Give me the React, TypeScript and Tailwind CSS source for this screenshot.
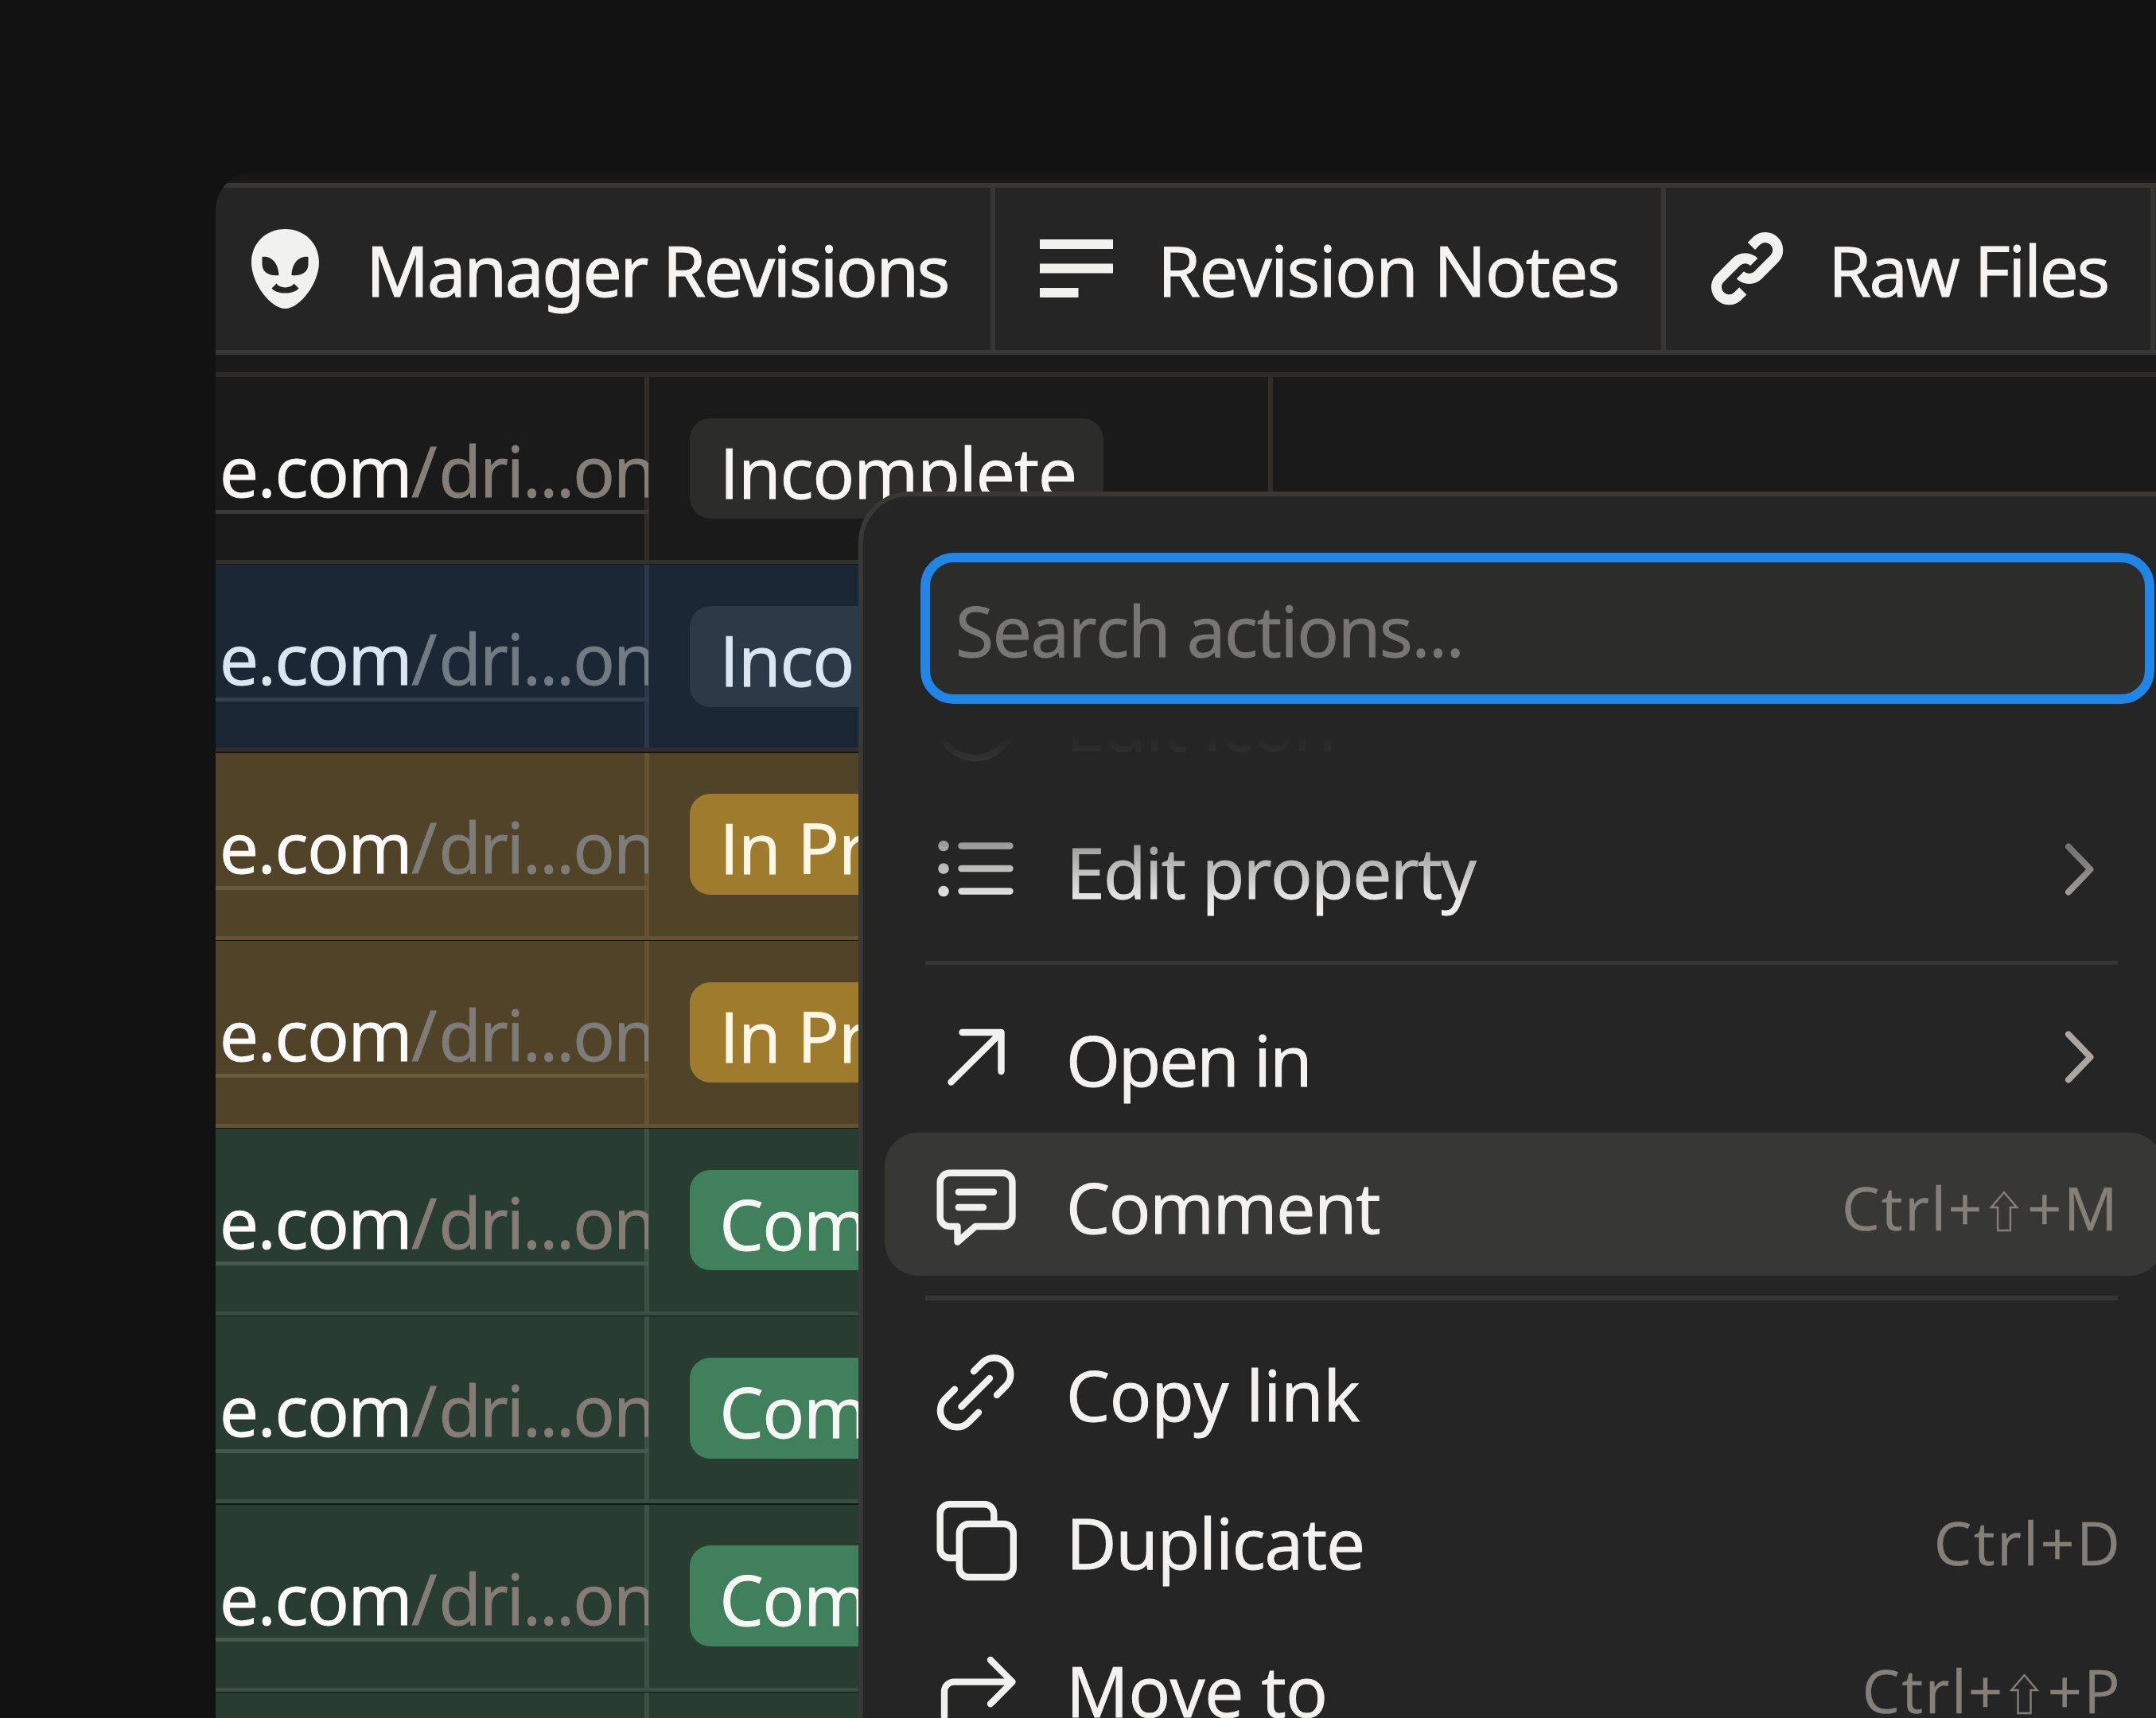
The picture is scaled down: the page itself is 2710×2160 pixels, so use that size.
import type { ReactNode } from "react";
import clsx from "clsx";

type Tone = "plain" | "blue" | "amber" | "green";

const TONES: Record<
  Tone,
  { row: string; edge: string; line: string; underline: string; link: string; muted: string; pill: string }
> = {
  plain: {
    row: "bg-[#1a1a1a]",
    edge: "border-[#323130]",
    line: "border-[#2e2d2c]",
    underline: "border-[#3c3a38]",
    link: "text-[#f8f7f6]",
    muted: "text-[#857e78]",
    pill: "bg-[#2c2c2b] text-[#f7f6f5]",
  },
  blue: {
    row: "bg-[#1b2735]",
    edge: "border-[#2d2e31]",
    line: "border-[#2c3847]",
    underline: "border-[#334050]",
    link: "text-[#dbe6f0]",
    muted: "text-[#727a84]",
    pill: "bg-[#2d3947] text-[#dbe6f0]",
  },
  amber: {
    row: "bg-[#514328]",
    edge: "border-[#655434]",
    line: "border-[#635334]",
    underline: "border-[#695b3b]",
    link: "text-[#fcfbf9]",
    muted: "text-[#7e7c79]",
    pill: "bg-[#9f7b2d] text-[#fcf7e6]",
  },
  green: {
    row: "bg-[#283c32]",
    edge: "border-[#3b4e42]",
    line: "border-[#3c5044]",
    underline: "border-[#46574b]",
    link: "text-[#fcfbfa]",
    muted: "text-[#857c76]",
    pill: "bg-[#41805d] text-[#f7f7f6]",
  },
};

const ROWS: { tone: Tone; status: string }[] = [
  { tone: "plain", status: "Incomplete" },
  { tone: "blue", status: "Incomplete" },
  { tone: "amber", status: "In Progress" },
  { tone: "amber", status: "In Progress" },
  { tone: "green", status: "Completed" },
  { tone: "green", status: "Completed" },
  { tone: "green", status: "Completed" },
  { tone: "green", status: "Completed" },
];

function AlienIcon() {
  return (
    <svg viewBox="0 0 85 100" className="h-[100px] w-[85px] shrink-0">
      <path
        fill="#f1f1ef"
        fillRule="evenodd"
        d="M42.5 0C67 0 85 18 85 42C85 68 61 100 42.5 100S0 68 0 42C0 18 18 0 42.5 0ZM13.5 35C25 33 34 43 34.5 58C22 59.500 13.500 54 13.500 44ZM71.500 35C60 33 51 43 50.500 58C63 59.500 71.500 54 71.500 44ZM31.500 68.500C36 75 49 75 53.500 68.500L59.500 74.500C53 82.500 32 82.500 25.500 74.500Z"
      />
    </svg>
  );
}

function TextIcon() {
  return (
    <svg viewBox="0 0 92 73" fill="#f1f1ef" className="h-[73px] w-[92px] shrink-0">
      <rect width="92" height="12" />
      <rect y="30.500" width="92" height="12" />
      <rect y="61" width="48.500" height="12" />
    </svg>
  );
}

function ChainIcon() {
  return (
    <svg
      viewBox="0 0 92 93"
      fill="none"
      stroke="#f1f1ef"
      strokeWidth="13"
      className="h-[93px] w-[92px] shrink-0"
    >
      <path d="M51.400 18.400L58.600 11.200A15.900 15.900 0 0 1 81 33.600L59.800 54.800A15.900 15.900 0 0 1 37.400 54.800" />
      <path d="M40.800 74.800L33.600 82A15.900 15.900 0 0 1 11.200 59.600L32.400 38.400A15.900 15.900 0 0 1 54.800 38.400" />
    </svg>
  );
}

function MenuIcon({ children }: { children: ReactNode }) {
  return (
    <svg
      viewBox="0 0 104 104"
      fill="none"
      stroke="#f1f1ef"
      strokeWidth="8.4"
      strokeLinecap="round"
      strokeLinejoin="round"
      className="size-[104px] shrink-0"
    >
      {children}
    </svg>
  );
}

function Chevron() {
  return (
    <svg
      viewBox="0 0 36 66"
      fill="none"
      stroke="#aba6a1"
      strokeWidth="8"
      strokeLinecap="round"
      strokeLinejoin="round"
      className="mr-[35px] h-[66px] w-9 shrink-0"
    >
      <path d="M4 4.500L31.500 33L4 61.500" />
    </svg>
  );
}

function Shift() {
  return (
    <span className="-ml-0.5 inline-block align-[3px] font-['Noto_Sans_CJK_SC',sans-serif] text-[54px] leading-none">
      ⇧
    </span>
  );
}

function HeaderCell({ className, children }: { className: string; children: ReactNode }) {
  return (
    <div className={clsx("flex h-full shrink-0 items-center border-r-[6px] border-[#373635]", className)}>
      {children}
    </div>
  );
}

function Row({ tone, status }: { tone: Tone; status: string }) {
  const t = TONES[tone];
  return (
    <div className="h-[236.25px] shrink-0 bg-[#151512] pb-[1.25px]">
      <div className={clsx("flex h-full border-b-[5px]", t.row, t.edge)}>
        <div className={clsx("w-[545px] shrink-0 border-r-[6px]", t.line)}>
          <div
            className={clsx(
              "-mr-[5px] h-[172px] overflow-hidden whitespace-nowrap border-b-[5px] pl-[5px] pt-[66px] leading-[103px] tracking-[-1.3px]",
              t.underline,
            )}
          >
            <span className={t.link}>e.com</span>
            <span className={clsx("tracking-[-1.9px]", t.muted)}>
              <span className="mr-[4px]">/</span>dri...on
            </span>
          </div>
        </div>
        <div
          className={clsx(
            "flex w-[784px] shrink-0 items-center pl-[50.5px]",
            tone === "plain" && "border-r-[6px]",
            t.line,
          )}
        >
          <div
            className={clsx(
              "h-[126.5px] whitespace-nowrap rounded-[26px] pl-[38px] pr-[34px] pt-[8px] leading-[118.5px] tracking-[-1px]",
              t.pill,
            )}
          >
            {status}
          </div>
        </div>
      </div>
    </div>
  );
}

function MenuItem({
  icon,
  label,
  tracking,
  active,
  children,
}: {
  icon: ReactNode;
  label: string;
  tracking?: string;
  active?: boolean;
  children?: ReactNode;
}) {
  return (
    <div
      className={clsx(
        "flex h-[180px] shrink-0 items-center rounded-[42px] pl-[62px]",
        active ? "bg-[#373736] pr-[55px]" : "pr-[52px]",
      )}
    >
      <MenuIcon>{icon}</MenuIcon>
      <span className={clsx("ml-[62px] flex-1 whitespace-nowrap pt-[6px] text-[#f3f2f1]", tracking)}>
        {label}
      </span>
      {children}
    </div>
  );
}

function Shortcut({ children }: { children: ReactNode }) {
  return (
    <span className="whitespace-nowrap pt-[7px] text-[75.5px] leading-[100px] tracking-[2.3px] text-[#857f7a] [-webkit-text-stroke:0.4px]">
      {children}
    </span>
  );
}

function Divider() {
  return <div className="my-[19.5px] ml-[51px] mr-[57px] h-[5.5px] shrink-0 bg-[#363635]" />;
}

export default function App() {
  return (
    <div className="relative h-[2160px] w-[2710px] overflow-hidden bg-[#121212] pl-[271px] pt-[215px] font-['Open_Sans',sans-serif] text-[87.5px] leading-[120px] [-webkit-text-stroke:1px]">
      <div className="flex h-full flex-col overflow-hidden rounded-tl-[50px] bg-linear-to-b from-[#131313] to-[#191a19] to-[14px] pt-[14.5px]">
        <div className="flex h-[216.5px] shrink-0 border-y-[6.5px] border-[#393736] bg-[#252525] text-[#f5f4f3]">
          <HeaderCell className="w-[980px] pl-[45px]">
            <AlienIcon />
            <span className="ml-[59px] whitespace-nowrap pt-[2px] font-['Noto_Sans',sans-serif] tracking-[-2.6px]">
              Manager Revisions
            </span>
          </HeaderCell>
          <HeaderCell className="w-[843px] pl-[56px]">
            <TextIcon />
            <span className="ml-[56px] whitespace-nowrap pt-[2px] tracking-[-1.6px]">Revision Notes</span>
          </HeaderCell>
          <HeaderCell className="w-[615px] pl-[56px]">
            <ChainIcon />
            <span className="ml-[56px] whitespace-nowrap pt-[2px] tracking-[-2.4px]">Raw Files</span>
          </HeaderCell>
        </div>
        <div className="mt-[22px] h-[6px] shrink-0 bg-[#2d2b2a]" />
        {ROWS.map((row, i) => (
          <Row key={i} tone={row.tone} status={row.status} />
        ))}
      </div>

      <div className="absolute left-[1079px] top-[617.5px] flex h-[1700px] w-[1760px] flex-col rounded-[64px] border-[6px] border-[#393837] bg-[#252525]">
        <div className="ml-[72px] mt-[71.5px] h-[190px] w-[1551px] shrink-0 rounded-[42px] border-[12.5px] border-[#2185e6] bg-[#2c2c2b] pl-[32px] pt-[5px] leading-[160px] tracking-[-1.3px] text-[#777675]">
          Search actions...
        </div>
        <div className="ml-[27px] flex w-[1607px] flex-1 flex-col overflow-hidden [mask-image:linear-gradient(to_bottom,transparent_40px,rgba(0,0,0,0.07)_70px,rgba(0,0,0,0.2)_115px,rgba(0,0,0,0.6)_180px,rgba(0,0,0,0.94)_244px,black_265px)]">
          <div className="-mt-[68px] flex flex-col gap-[5.7px]">
            <MenuItem
              label="Edit icon"
              tracking="tracking-[-1.1px]"
              icon={<circle cx="52" cy="52" r="46" />}
            />
            <MenuItem
              label="Edit property"
              tracking="tracking-[-1.5px]"
              icon={
                <>
                  <g fill="#f1f1ef" stroke="none">
                    <circle cx="12" cy="22.500" r="6.800" />
                    <circle cx="12" cy="51" r="6.800" />
                    <circle cx="12" cy="79.500" r="6.800" />
                  </g>
                  <path d="M34.500 22.500H95.500M34.500 51H95.500M34.500 79.500H95.500" />
                </>
              }
            >
              <Chevron />
            </MenuItem>
            <Divider />
            <MenuItem
              label="Open in"
              tracking="tracking-[-2.2px]"
              icon={<path d="M35.500 21H84.500V70M84.500 21L21.500 83.600" />}
            >
              <Chevron />
            </MenuItem>
            <MenuItem
              active
              label="Comment"
              tracking="tracking-[-1.4px]"
              icon={
                <>
                  <path d="M20 12.800H86.500A12 12 0 0 1 98.500 24.800V68A12 12 0 0 1 86.500 80H52L29.500 99.500V80H20A12 12 0 0 1 7.700 68V24.800A12 12 0 0 1 20 12.800Z" />
                  <path d="M30.800 36.700H75M30.800 56H62" />
                </>
              }
            >
              <Shortcut>
                Ctrl+
                <Shift />
                +M
              </Shortcut>
            </MenuItem>
            <Divider />
            <MenuItem
              label="Copy link"
              tracking="tracking-[-0.3px]"
              icon={
                <>
                  <path d="M50 26L61.300 14.800A20.800 20.800 0 0 1 90.700 44.200L79 56" />
                  <path d="M26 48.800L14 60.800A20.800 20.800 0 0 0 43.500 90.200L56 77.800" />
                  <path d="M70 35L34.500 70.500" />
                </>
              }
            />
            <MenuItem
              label="Duplicate"
              tracking="tracking-[-1.2px]"
              icon={
                <>
                  <path
                    strokeLinecap="butt"
                    d="M32 74.700H19.700A12 12 0 0 1 7.700 62.700V19.200A12 12 0 0 1 19.700 7.200H63.300A12 12 0 0 1 75.300 19.200V32"
                  />
                  <rect x="31.800" y="32" width="68" height="67" rx="12" />
                </>
              }
            >
              <Shortcut>Ctrl+D</Shortcut>
            </MenuItem>
            <MenuItem
              label="Move to"
              tracking="tracking-[-0.3px]"
              icon={<path d="M13 88V56.600A12 12 0 0 1 25 44.600H98.500M71 17L98.500 44.600L71 72.200" />}
            >
              <Shortcut>
                Ctrl+
                <Shift />
                +P
              </Shortcut>
            </MenuItem>
          </div>
        </div>
      </div>
    </div>
  );
}
